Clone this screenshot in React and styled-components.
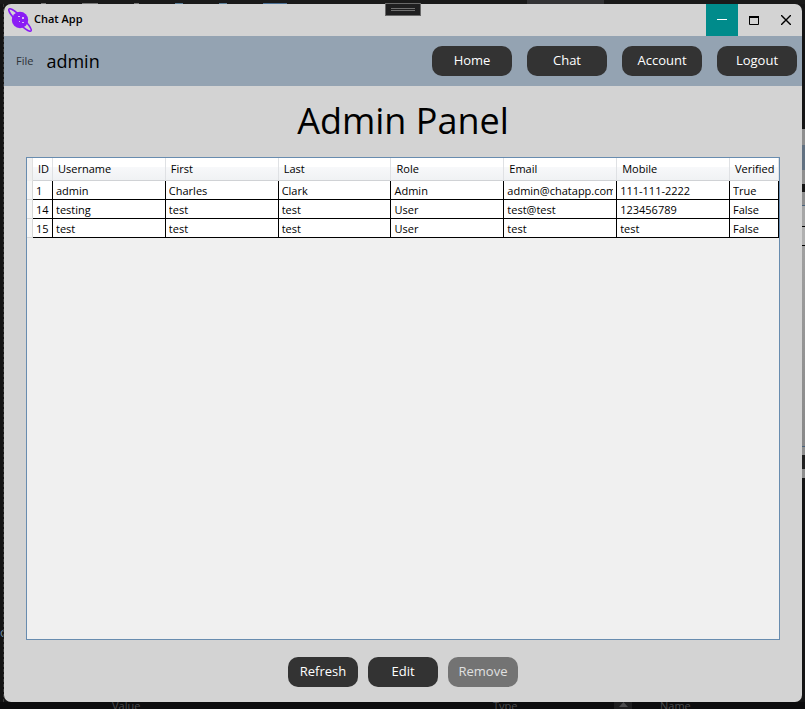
import React from "react";
import styled, { createGlobalStyle, css } from "styled-components";

const GlobalStyle = createGlobalStyle`
  *, *::before, *::after { box-sizing: border-box; }
  body { margin: 0; background: #0d0d0e; }
  body, button { font-family: "Open Sans", "Noto Sans", sans-serif; }
`;

const Desktop = styled.div`
  display: grid;
  grid-template: 4px 1fr 7px / 4px 1fr 3px;
  min-height: 100vh;
  background: #161616;
  overflow: hidden;
`;

const TopEdge = styled.div`
  grid-column: 1 / -1;
  display: flex;
  justify-content: flex-end;
  background: #1a1a1a;
`;

const EditorTab = styled.div`
  width: 77px;
  margin-right: 201px;
  background: #333335;
`;

const CodeRemnants = styled.div`
  display: flex;
  align-items: flex-end;
  flex: 1;
  padding-left: 41px;
  gap: 36px;
`;

const Remnant = styled.span`
  width: ${(p) => p.$width}px;
  height: 1px;
  background: ${(p) => p.$fill};
`;

const LeftEdge = styled.div`
  padding-top: 620px;
  height: 0;
  min-height: 100%;
  overflow: hidden;
  color: #6d8aa0;
  font-size: 12px;
  line-height: 18px;
  background: #141414;
  border-right: 1px dashed #3a3a3a;
`;

const RightEdge = styled.div`
  display: flex;
  flex-direction: column;
  padding-top: 125px;
  overflow: hidden;
  background: #141415;
`;

const Sliver = styled.div`
  flex: 0 0 ${(p) => p.$size}px;
  background: ${(p) => p.$fill};
`;

const BottomEdge = styled.div`
  grid-column: 1 / -1;
  display: grid;
  grid-template-columns: 112px 381px 121px 46px 1fr;
  height: 7px;
  overflow: hidden;
  color: #4b4b4d;
  font-size: 11px;
  line-height: 7px;
  background: #0c0c0d;
`;

const ScrollArrow = styled.span`
  width: 18px;
  height: 7px;
  background: #1d1d1e;
  display: flex;
  justify-content: center;

  svg { display: block; }
`;

const Window = styled.main`
  position: relative;
  display: flex;
  flex-direction: column;
  min-width: 0;
  border-radius: 7px;
  background: #d3d3d3;
  color: #000;
`;

const TitleBar = styled.header`
  display: flex;
  align-items: center;
  height: 32px;
  padding-left: 4px;
`;

const AppTitle = styled.span`
  flex: 1;
  margin-left: 2px;
  font-size: 11px;
  font-weight: 600;
  line-height: 16px;
  padding-bottom: 2px;
`;

const WindowButton = styled.button`
  display: grid;
  place-items: center;
  width: 32px;
  height: 32px;
  padding: 0;
  border: 0;
  color: ${(p) => (p.$active ? "#fff" : "#000")};
  background: ${(p) => (p.$active ? "#008b8b" : "transparent")};
`;

const DebugHandle = styled.div`
  position: absolute;
  top: -1px;
  left: 50%;
  transform: translateX(-50%);
  display: grid;
  align-content: center;
  justify-items: center;
  width: 36px;
  height: 13px;
  border: 1px solid #686868;
  background: #1f1f20;

  &::before {
    content: "";
    width: 24px;
    height: 3px;
    border: solid #707070;
    border-width: 1px 0;
  }
`;

const MenuBar = styled.nav`
  display: flex;
  align-items: center;
  height: 50px;
  padding: 0 5px 0 12px;
  background: #94a3b2;
`;

const FileMenu = styled.button`
  padding: 0;
  border: 0;
  background: none;
  color: #2d3237;
  font-size: 11px;
  line-height: 16px;
`;

const UserName = styled.span`
  flex: 1;
  margin-left: 13px;
  font-size: 18px;
  line-height: 24px;
`;

const ButtonGroup = styled.div`
  display: flex;
  justify-content: center;
  gap: ${(p) => p.$gap}px;
`;

const PillButton = styled.button`
  width: ${(p) => p.$width}px;
  height: 30px;
  padding: 0 0 2px;
  border: 0;
  border-radius: 10px;
  background: #333;
  color: #fff;
  font-size: 13px;
  line-height: 18px;

  &:disabled {
    background: #737373;
    color: #e0e0e0;
  }
`;

const Heading = styled.h1`
  margin: 10px 0 11px;
  font-size: 36px;
  font-weight: 400;
  line-height: 50px;
  text-align: center;
`;

const GridFrame = styled.section`
  flex: 1;
  margin: 0 22px;
  border: 1px solid #688caf;
  background: #f0f0f0;
`;

const UserTable = styled.table`
  width: 100%;
  table-layout: fixed;
  border-collapse: separate;
  border-spacing: 0;
  font-size: 11px;
  text-align: left;
`;

const Column = styled.col`
  ${(p) => p.$width && css`width: ${p.$width}px;`}
`;

const HeaderCell = styled.th`
  height: 23px;
  padding: 0 0 0 5px;
  overflow: hidden;
  font-weight: 400;
  line-height: 18px;
  white-space: nowrap;
  border-right: 1px solid #dfe1e4;
  border-bottom: 1px solid #d0d2d5;
  background: linear-gradient(#fff 0 40%, #f7f8fa 41%, #f0f2f4);
`;

const CornerCell = styled.td`
  padding: 0;
  border-right: 1px solid #e0e0e0;
`;

const RowGrip = styled.td`
  padding: 0;
  border-right: 1px solid #d8d8d8;
  border-bottom: 1px solid #d8d8d8;
  background: #f7f7f7;
`;

const Cell = styled.td`
  height: 19px;
  padding: 2px 3px 0;
  border-right: 1px solid #000;
  border-bottom: 1px solid #000;
  background: #fff;
`;

const CellText = styled.div`
  overflow: hidden;
  line-height: 16px;
  white-space: nowrap;
`;

const Footer = styled.footer`
  padding: 17px 0 15px;
`;

const columns = [
  ["ID", 20],
  ["Username"],
  ["First"],
  ["Last"],
  ["Role"],
  ["Email"],
  ["Mobile"],
  ["Verified", 49],
];

const users = [
  ["1", "admin", "Charles", "Clark", "Admin", "admin@chatapp.com", "111-111-2222", "True"],
  ["14", "testing", "test", "test", "User", "test@test", "123456789", "False"],
  ["15", "test", "test", "test", "User", "test", "test", "False"],
];

const codeRemnants = [
  [5, "#777"],
  [16, "#777"],
  [5, "#777"],
  [8, "#5b7f99"],
  [8, "#5b7f99"],
  [24, "#4a6f94"],
];

const backgroundSlivers = [
  [16, "#8e8e8e"],
  [25, "#627181"],
  [14, "#8e8e8e"],
  [8, "#151515"],
  [13, "#8e8e8e"],
  [1, "#49627b"],
  [20, "#a6a6a6"],
  [1, "#000"],
  [18, "#b0b0b0"],
  [1, "#000"],
  [200, "linear-gradient(#a0a0a0, #888)"],
  [1, "#49627b"],
  [8, "#8e8e8e"],
  [14, "#202020"],
  [9, "#8e8e8e"],
];

function PlanetLogo() {
  return (
    <svg width="24" height="24" viewBox="0 0 24 24" aria-hidden="true">
      <ellipse
        cx="12"
        cy="12"
        rx="15.5"
        ry="3.2"
        transform="rotate(45 12 12)"
        fill="none"
        stroke="#8b1cf5"
        strokeWidth="1.5"
      />
      <circle cx="12" cy="12" r="8.2" fill="#8b1cf5" />
      <path d="M10 8h2v1h-2zM14 9h2v2h-2zM11 13h1v1h-1zM14 14h2v1h-2z" fill="#d9b8f5" />
    </svg>
  );
}

export default function App() {
  return (
    <>
      <GlobalStyle />
      <Desktop>
        <TopEdge>
          <CodeRemnants>
            {codeRemnants.map(([width, fill], i) => <Remnant key={i} $width={width} $fill={fill} />)}
          </CodeRemnants>
          <EditorTab />
        </TopEdge>
        <LeftEdge aria-hidden="true">o</LeftEdge>
        <Window>
          <TitleBar>
            <PlanetLogo />
            <AppTitle>Chat App</AppTitle>
            <WindowButton $active aria-label="Minimize">
              <svg width="10" height="10" aria-hidden="true">
                <path d="M0 4.500h10" stroke="currentColor" />
              </svg>
            </WindowButton>
            <WindowButton aria-label="Maximize">
              <svg width="10" height="10" aria-hidden="true">
                <path d="M.5 1v8.500h9V1" fill="none" stroke="currentColor" />
                <path d="M0 1h10v2H0z" fill="currentColor" />
              </svg>
            </WindowButton>
            <WindowButton aria-label="Close">
              <svg width="10" height="10" aria-hidden="true">
                <path d="M0 0l10 10M10 0L0 10" stroke="currentColor" strokeWidth="1.400" />
              </svg>
            </WindowButton>
          </TitleBar>
          <DebugHandle />
          <MenuBar>
            <FileMenu>File</FileMenu>
            <UserName>admin</UserName>
            <ButtonGroup $gap={15}>
              {["Home", "Chat", "Account", "Logout"].map((label) => (
                <PillButton key={label} $width={80}>{label}</PillButton>
              ))}
            </ButtonGroup>
          </MenuBar>
          <Heading>Admin Panel</Heading>
          <GridFrame>
            <UserTable>
              <colgroup>
                <Column $width={6} />
                {columns.map(([name, width]) => <Column key={name} $width={width} />)}
              </colgroup>
              <thead>
                <tr>
                  <CornerCell />
                  {columns.map(([name]) => <HeaderCell key={name} scope="col">{name}</HeaderCell>)}
                </tr>
              </thead>
              <tbody>
                {users.map((user) => (
                  <tr key={user[0]}>
                    <RowGrip />
                    {user.map((value, i) => (
                      <Cell key={columns[i][0]}><CellText>{value}</CellText></Cell>
                    ))}
                  </tr>
                ))}
              </tbody>
            </UserTable>
          </GridFrame>
          <Footer>
            <ButtonGroup $gap={10}>
              <PillButton $width={70}>Refresh</PillButton>
              <PillButton $width={70}>Edit</PillButton>
              <PillButton $width={70} disabled>Remove</PillButton>
            </ButtonGroup>
          </Footer>
        </Window>
        <RightEdge>
          {backgroundSlivers.map(([size, fill], i) => <Sliver key={i} $size={size} $fill={fill} />)}
        </RightEdge>
        <BottomEdge aria-hidden="true">
          <span />
          <span>Value</span>
          <span>Type</span>
          <ScrollArrow>
            <svg width="9" height="5"><path d="M0 5L4.500 0L9 5z" fill="#4b4b4d" /></svg>
          </ScrollArrow>
          <span>Name</span>
        </BottomEdge>
      </Desktop>
    </>
  );
}
